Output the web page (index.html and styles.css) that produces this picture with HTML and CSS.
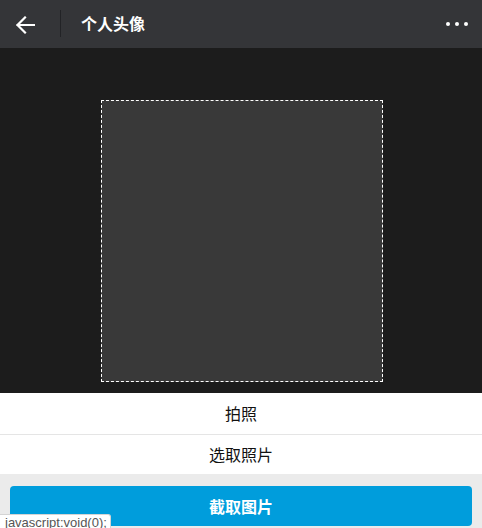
FILE: index.html
```html
<!DOCTYPE html>
<html lang="zh">
<head>
<meta charset="utf-8">
<title>个人头像</title>
<link rel="stylesheet" href="styles.css">
</head>
<body>
<div class="page">
  <header class="topbar">
    <a class="back" href="javascript:void(0);">
      <svg width="20" height="18" viewBox="0 0 20 18"><path d="M10 1.5 L2.5 9 L10 16.5 M2.5 9 H19.5" fill="none" stroke="#fff" stroke-width="2.2" stroke-linecap="square"/></svg>
    </a>
    <span class="divider"></span>
    <h1 class="title">个人头像</h1>
    <span class="more"><i></i><i></i><i></i></span>
  </header>
  <main class="stage">
    <div class="crop"></div>
  </main>
  <ul class="actions">
    <li class="action">拍照</li>
    <li class="action">选取照片</li>
  </ul>
  <div class="footer">
    <a class="btn" href="javascript:void(0);">截取图片</a>
  </div>
  <div class="status">javascript:void(0);</div>
</div>
</body>
</html>
```
FILE: styles.css
```css
* { box-sizing: border-box; }
html, body { margin: 0; padding: 0; }
body {
  font-family: "Noto Sans CJK SC", "Liberation Sans", sans-serif;
  background: #ebebeb;
  width: 482px;
  height: 528px;
  overflow: hidden;
}
.page { position: relative; height: 528px; }
.topbar {
  height: 48px;
  background: #343538;
  display: flex;
  align-items: center;
}
.back {
  width: 50px;
  display: flex;
  justify-content: center;
}
.back svg { display: block; margin-left: -1px; margin-top: 1px; }
.divider {
  width: 1px;
  height: 27px;
  background: #222326;
  margin-left: 10px;
  margin-top: -1px;
}
.title {
  margin: -2px 0 0 20px;
  font-size: 16px;
  font-weight: bold;
  color: #fff;
  flex: 1;
  line-height: 1;
}
.more {
  display: flex;
  gap: 5px;
  margin-right: 14px;
}
.more i {
  width: 4px;
  height: 4px;
  background: #fff;
  border-radius: 50%;
}
.stage {
  height: 345px;
  background: #1c1c1c;
  display: flex;
  justify-content: center;
  padding-top: 52px;
}
.crop {
  width: 282px;
  height: 282px;
  border: 1px dashed #fff;
  background: #393939;
  margin-left: 1px;
}
.actions {
  list-style: none;
  margin: 0;
  padding: 0;
  background: #fff;
}
.action {
  height: 41px;
  line-height: 41px;
  text-align: center;
  font-size: 16px;
  color: #111;
}
.action + .action { border-top: 1px solid #e5e5e5; height: 40px; line-height: 39px; }
.footer {
  padding: 12px 10px 0;
}
.btn {
  display: block;
  height: 40px;
  line-height: 40px;
  background: #009ddc;
  border-radius: 4px;
  color: #fff;
  text-align: center;
  font-size: 16px;
  font-weight: bold;
  text-decoration: none;
}
.status {
  position: absolute;
  left: 0;
  bottom: -4px;
  height: 18px;
  padding: 0 3px 0 5px;
  background: #fff;
  border: 1px solid #d4d4d4;
  border-left: none;
  border-radius: 0 3px 0 0;
  font-family: "Liberation Sans", sans-serif;
  font-size: 13px;
  line-height: 16px;
  color: #555;
}
```
